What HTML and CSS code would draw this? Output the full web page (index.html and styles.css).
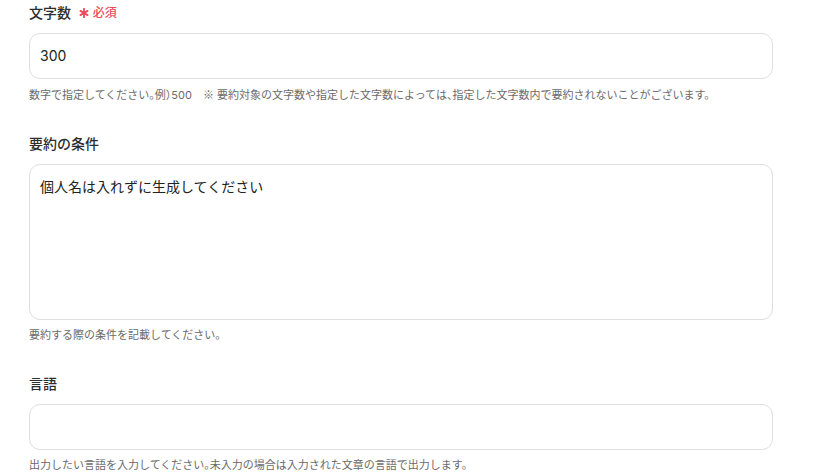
FILE: index.html
```html
<!DOCTYPE html>
<html lang="ja">
<head>
<meta charset="utf-8">
<link rel="stylesheet" href="styles.css">
</head>
<body>
<div class="form">
  <div class="field">
    <div class="label">文字数 <span class="req"><svg class="star" viewBox="0 0 10 10" width="10" height="10"><g stroke="#ec4a5a" stroke-width="1.8" stroke-linecap="round"><line x1="5" y1="0.8" x2="5" y2="9.2"/><line x1="1.4" y1="2.9" x2="8.6" y2="7.1"/><line x1="1.4" y1="7.1" x2="8.6" y2="2.9"/></g></svg>必須</span></div>
    <div class="input">300</div>
    <div class="help">数字で指定してください。例）500　<span class="mark">※</span> 要約対象の文字数や指定した文字数によっては、指定した文字数内で要約されないことがございます。</div>
  </div>
  <div class="field">
    <div class="label">要約の条件</div>
    <div class="input textarea">個人名は入れずに生成してください</div>
    <div class="help">要約する際の条件を記載してください。</div>
  </div>
  <div class="field">
    <div class="label">言語</div>
    <div class="input"></div>
    <div class="help">出力したい言語を入力してください。未入力の場合は入力された文章の言語で出力します。</div>
  </div>
</div>
</body>
</html>
```
FILE: styles.css
```css
html, body {
  margin: 0;
  padding: 0;
  background: #ffffff;
}
body {
  font-family: Inter, "Noto Sans CJK JP", sans-serif;
  color: #333333;
}
.form {
  padding: 3px 47px 0 29px;
  display: flex;
  flex-direction: column;
  gap: 31px;
}
.field {
  display: flex;
  flex-direction: column;
}
.label {
  font-size: 14px;
  line-height: 20px;
  font-weight: 500;
  color: #2d2d2d;
  margin-bottom: 10px;
}
.req {
  color: #ec4a5a;
  font-size: 12px;
  font-weight: 500;
  margin-left: 4px;
  display: inline-flex;
  align-items: center;
  gap: 4px;
}
.star {
  display: block;
}
.input {
  box-sizing: border-box;
  height: 46px;
  border: 1px solid #dedee3;
  border-radius: 11px;
  padding: 0 10px;
  font-size: 14px;
  line-height: 44px;
  color: #222222;
}
.textarea {
  height: 156px;
  line-height: 20px;
  padding-top: 12px;
}
.help {
  font-size: 11px;
  line-height: 16px;
  color: #6b6b6b;
  margin-top: 7px;
  font-feature-settings: "halt";
}
.mark {
  font-family: "Noto Sans CJK JP", sans-serif;
  font-feature-settings: normal;
}
```
